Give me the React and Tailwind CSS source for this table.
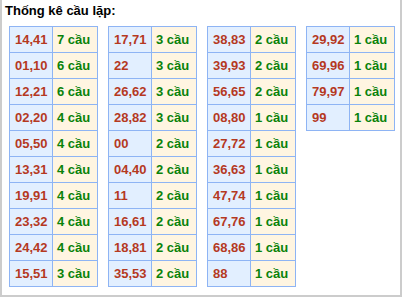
const TABLES = [
  [['14,41', 7], ['01,10', 6], ['12,21', 6], ['02,20', 4], ['05,50', 4], ['13,31', 4], ['19,91', 4], ['23,32', 4], ['24,42', 4], ['15,51', 3]],
  [['17,71', 3], ['22', 3], ['26,62', 3], ['28,82', 3], ['00', 2], ['04,40', 2], ['11', 2], ['16,61', 2], ['18,81', 2], ['35,53', 2]],
  [['38,83', 2], ['39,93', 2], ['56,65', 2], ['08,80', 1], ['27,72', 1], ['36,63', 1], ['47,74', 1], ['67,76', 1], ['68,86', 1], ['88', 1]],
  [['29,92', 1], ['69,96', 1], ['79,97', 1], ['99', 1]],
]

export default function App() {
  return (
    <div className="w-[402px] h-[297px] border-x-2 border-b-2 border-[#cccccc] bg-white font-['Liberation_Sans',Arial,sans-serif]">
      <div className="pl-[3px] pt-[3px] h-[26px] text-[13px] font-bold text-black leading-[16px]">Thống kê cầu lặp:</div>
      <div className="flex items-start gap-[10px] pl-[7px]">
        {TABLES.map((rows, t) => (
          <table key={t} className="border-collapse text-[13px] font-bold">
            <tbody>
              {rows.map(([pair, n]) => (
                <tr key={pair} className="h-[26px]">
                  <td className="w-[43px] border border-[#8eb4f4] bg-[#e2efff] pl-[5px] text-[#b5391f]">{pair}</td>
                  <td className="w-[45px] border border-[#8eb4f4] bg-[#fff5e1] pl-[4px] text-[#0a820a]">{n} cầu</td>
                </tr>
              ))}
            </tbody>
          </table>
        ))}
      </div>
    </div>
  )
}
